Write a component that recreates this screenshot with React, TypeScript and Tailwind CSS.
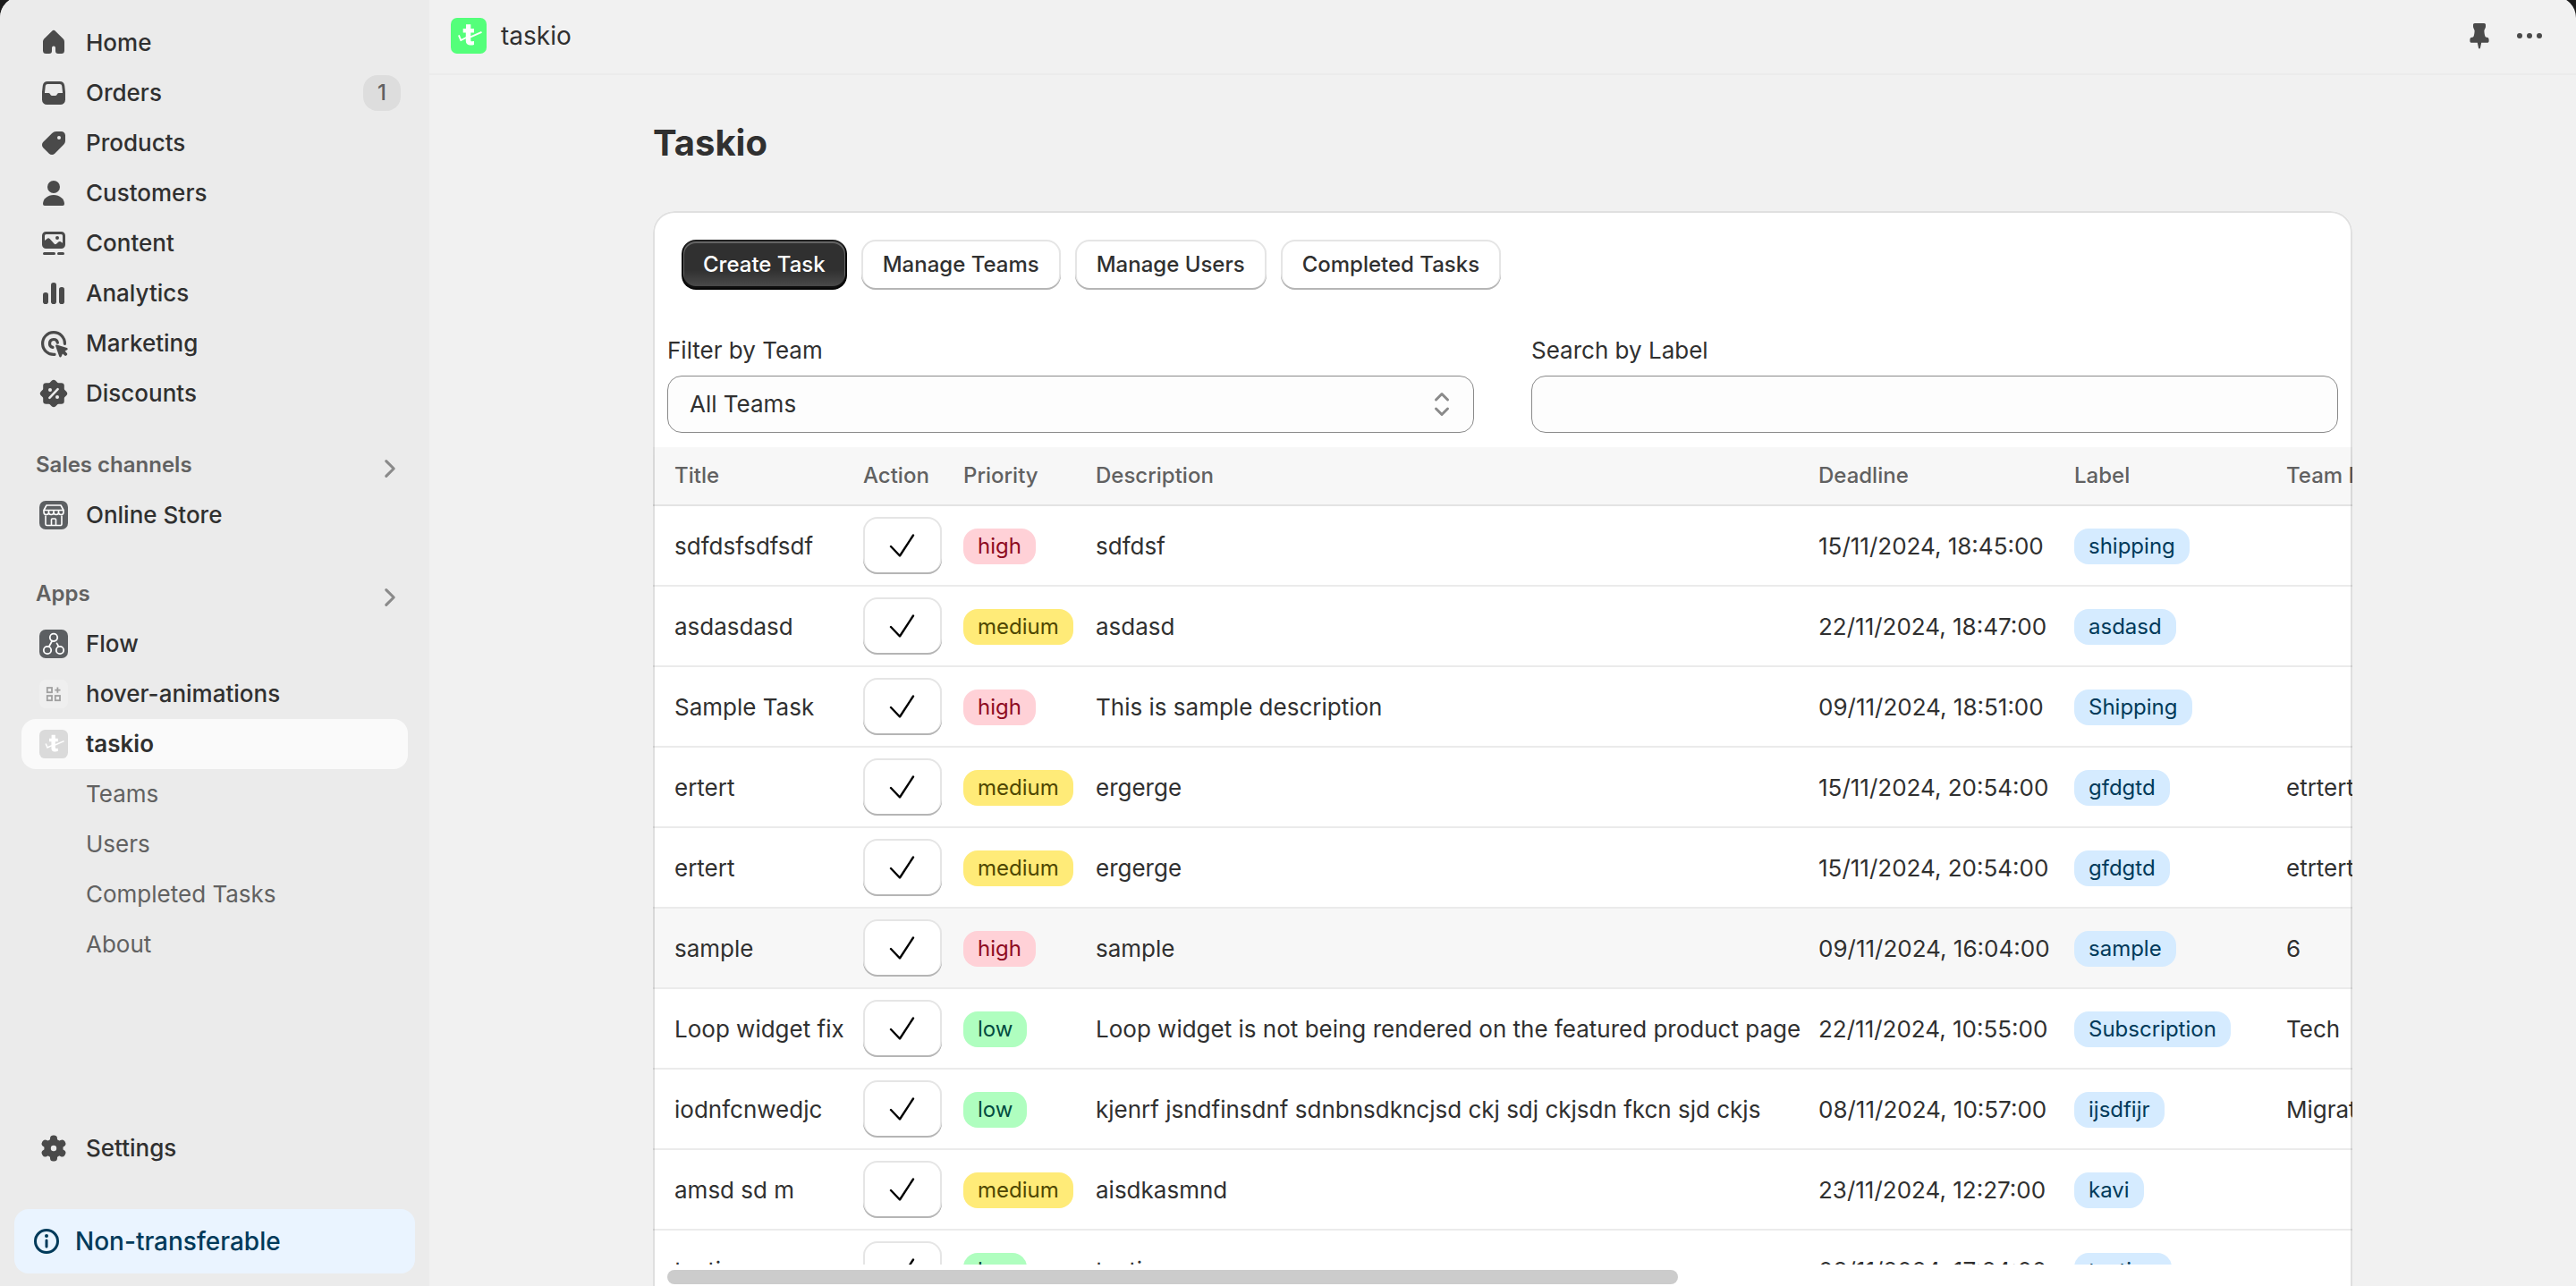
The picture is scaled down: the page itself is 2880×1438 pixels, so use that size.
import type { ReactNode } from "react";

type Level = "high" | "medium" | "low";

type Task = {
  title: string;
  priority: Level;
  description: string;
  deadline: string;
  label: string;
  team?: string;
  hovered?: boolean;
};

const tasks: Task[] = [
  { title: "sdfdsfsdfsdf", priority: "high", description: "sdfdsf", deadline: "15/11/2024, 18:45:00", label: "shipping" },
  { title: "asdasdasd", priority: "medium", description: "asdasd", deadline: "22/11/2024, 18:47:00", label: "asdasd" },
  { title: "Sample Task", priority: "high", description: "This is sample description", deadline: "09/11/2024, 18:51:00", label: "Shipping" },
  { title: "ertert", priority: "medium", description: "ergerge", deadline: "15/11/2024, 20:54:00", label: "gfdgtd", team: "etrtert" },
  { title: "ertert", priority: "medium", description: "ergerge", deadline: "15/11/2024, 20:54:00", label: "gfdgtd", team: "etrtert" },
  { title: "sample", priority: "high", description: "sample", deadline: "09/11/2024, 16:04:00", label: "sample", team: "6", hovered: true },
  { title: "Loop widget fix", priority: "low", description: "Loop widget is not being rendered on the featured product page", deadline: "22/11/2024, 10:55:00", label: "Subscription", team: "Tech" },
  { title: "iodnfcnwedjc", priority: "low", description: "kjenrf jsndfinsdnf sdnbnsdkncjsd ckj sdj ckjsdn fkcn sjd ckjs", deadline: "08/11/2024, 10:57:00", label: "ijsdfijr", team: "Migration" },
  { title: "amsd sd m", priority: "medium", description: "aisdkasmnd", deadline: "23/11/2024, 12:27:00", label: "kavi" },
  { title: "testing", priority: "low", description: "testing", deadline: "08/11/2024, 17:24:00", label: "testing" },
];

const levelStyle: Record<Level, string> = {
  high: "bg-[#ffd1d7] text-[#8e0b21]",
  medium: "bg-[#ffeb78] text-[#4f4700]",
  low: "bg-[#affebf] text-[#014b40]",
};

function Icon({ children }: { children: ReactNode }) {
  return (
    <svg viewBox="0 0 20 20" className="size-10 shrink-0 text-[#4a4a4a]" fill="currentColor" aria-hidden="true">
      {children}
    </svg>
  );
}

const HomeIcon = () => (
  <Icon>
    <path d="M8.94 3.44a1.5 1.5 0 0 1 2.12 0l4.2 4.2c.47.47.74 1.1.74 1.77v4.84a1.75 1.75 0 0 1-1.75 1.75h-1.75a1.5 1.5 0 0 1-1.5-1.5v-1.75a1 1 0 0 0-2 0v1.75a1.5 1.5 0 0 1-1.5 1.5h-1.75a1.75 1.75 0 0 1-1.75-1.75v-4.84c0-.66.26-1.3.73-1.77z" />
  </Icon>
);

const OrdersIcon = () => (
  <Icon>
    <path
      fillRule="evenodd"
      d="M6.6 3.5h6.8a2.75 2.75 0 0 1 2.7 2.4l.4 3.5v4.35a2.75 2.75 0 0 1-2.75 2.75h-7.5a2.75 2.75 0 0 1-2.75-2.75V9.4l.4-3.5a2.75 2.75 0 0 1 2.7-2.4zm0 1.5a1.2 1.2 0 0 0-1.2 1.05L4.97 10H7.1a1 1 0 0 1 .9.6l.1.2a1 1 0 0 0 .9.7h2a1 1 0 0 0 .9-.7l.1-.2a1 1 0 0 1 .9-.6h2.13l-.43-3.95A1.2 1.2 0 0 0 13.4 5z"
    />
  </Icon>
);

const ProductsIcon = () => (
  <Icon>
    <path
      fillRule="evenodd"
      d="M11.4 3.5h2.85a2.25 2.25 0 0 1 2.25 2.25v2.85c0 .86-.34 1.69-.95 2.3l-4.95 4.95a2.25 2.25 0 0 1-3.18 0l-3.27-3.27a2.25 2.25 0 0 1 0-3.18L9.1 4.45a3.25 3.25 0 0 1 2.3-.95zM13 8a1 1 0 1 0 0-2 1 1 0 0 0 0 2z"
    />
  </Icon>
);

const CustomersIcon = () => (
  <Icon>
    <circle cx="10" cy="6.5" r="3.5" />
    <path d="M4 16c0-2.8 2.7-5 6-5s6 2.2 6 5a1 1 0 0 1-1 1H5a1 1 0 0 1-1-1z" />
  </Icon>
);

const ContentIcon = () => (
  <Icon>
    <path
      fillRule="evenodd"
      d="M5.75 3.5h8.5a2.25 2.25 0 0 1 2.25 2.25v5A2.25 2.25 0 0 1 14.25 13h-8.5a2.25 2.25 0 0 1-2.25-2.25v-5A2.25 2.25 0 0 1 5.75 3.5zm0 1.5a.75.75 0 0 0-.75.75v2.8l1.3-1.1a1.1 1.1 0 0 1 1.5.1l2.6 2.8.5.3.6-.3 1.2-1.1a1 1 0 0 1 1.2-.1l1.1.7v-4.1a.75.75 0 0 0-.75-.75z"
    />
    <circle cx="12" cy="7" r="1" />
    <rect x="4" y="15" width="7" height="1.5" rx=".75" />
    <rect x="12" y="15" width="4" height="1.5" rx=".75" />
  </Icon>
);

const AnalyticsIcon = () => (
  <Icon>
    <rect x="4" y="9.5" width="3" height="6.5" rx="1.4" />
    <rect x="8.5" y="4" width="3" height="12" rx="1.4" />
    <rect x="13" y="6.5" width="3" height="9.5" rx="1.4" />
  </Icon>
);

const MarketingIcon = () => (
  <Icon>
    <path d="M16.2 10.2a6.2 6.2 0 1 0-5.7 6" fill="none" stroke="currentColor" strokeWidth="1.6" strokeLinecap="round" />
    <path d="M12.2 9.6a2.25 2.25 0 1 0-2.7 2.6" fill="none" stroke="currentColor" strokeWidth="1.6" strokeLinecap="round" />
    <path d="M11.7 10.8l5.7 1.7c.6.2.6.9.1 1.1l-1.2.7 1.1 1.2c.3.3.3.7 0 1l-.3.3c-.3.3-.7.3-1 0l-1.1-1.1-.7 1.7c-.3.6-1 .5-1.2-.1l-2-5.8c-.1-.5.2-.8.6-.7z" />
  </Icon>
);

const DiscountsIcon = () => (
  <Icon>
    <rect x="4.1" y="4.1" width="11.8" height="11.8" rx="1.6" />
    <rect x="4.2" y="4.2" width="11.6" height="11.6" rx="1.6" transform="rotate(45 10 10)" />
    <g className="text-[#ebebeb]">
      <path d="M12.3 7.6l-4.6 4.8" stroke="currentColor" strokeWidth="1.3" strokeLinecap="round" />
      <circle cx="8" cy="8" r="1" />
      <circle cx="12" cy="12" r="1" />
    </g>
  </Icon>
);

const SettingsIcon = () => (
  <Icon>
    <circle cx="10" cy="10" r="5.3" />
    <rect x="8" y="2.7" width="4" height="14.6" rx="1.8" />
    <rect x="8" y="2.7" width="4" height="14.6" rx="1.8" transform="rotate(60 10 10)" />
    <rect x="8" y="2.7" width="4" height="14.6" rx="1.8" transform="rotate(120 10 10)" />
    <circle cx="10" cy="10" r="1.6" className="text-[#ebebeb]" />
  </Icon>
);

const StoreIcon = () => (
  <svg viewBox="0 0 32 32" className="mx-1 size-8 shrink-0" fill="none" stroke="#fff" strokeWidth="1.6" strokeLinejoin="round" aria-hidden="true">
    <rect width="32" height="32" rx="7" fill="#5c5f62" stroke="none" />
    <path d="M8 5h16l3 5.5H5z" />
    <path d="M5 10.5v2.2a2.7 2.7 0 0 0 5.5 0 2.75 2.75 0 0 0 5.5 0 2.75 2.75 0 0 0 5.5 0 2.7 2.7 0 0 0 5.5 0v-2.2M10.5 10.5v2.2M16 10.5v2.2M21.5 10.5v2.2" />
    <path d="M7 16.5V26a1.5 1.5 0 0 0 1.5 1.5h15A1.5 1.5 0 0 0 25 26v-9.5" />
    <path d="M13.5 27v-6a1 1 0 0 1 1-1h3a1 1 0 0 1 1 1v6" />
  </svg>
);

const FlowIcon = () => (
  <svg viewBox="0 0 32 32" className="mx-1 size-8 shrink-0" fill="none" stroke="#fff" strokeWidth="1.8" strokeLinecap="round" aria-hidden="true">
    <rect width="32" height="32" rx="7" fill="#5c5f62" stroke="none" />
    <circle cx="16" cy="8.8" r="4.2" />
    <circle cx="9" cy="23" r="4.2" />
    <circle cx="23" cy="23" r="4.2" />
    <path d="M14.2 12.8l-3.3 6.1M19.6 15.4v.1M20.3 16.5l1 2.3" />
  </svg>
);

const PlaceholderIcon = () => (
  <svg viewBox="0 0 32 32" className="mx-1 size-8 shrink-0" fill="none" stroke="#a0a0a0" strokeWidth="1.8" aria-hidden="true">
    <rect width="32" height="32" rx="7" fill="#efefef" stroke="none" />
    <rect x="8.8" y="9" width="5.2" height="5.2" />
    <rect x="8.8" y="18" width="5.2" height="5.2" />
    <rect x="17.8" y="18" width="5.2" height="5.2" />
    <path d="M20.4 8.5v6.2M17.3 11.6h6.2" />
  </svg>
);

function TaskioMark({ className, background, radius }: { className: string; background: string; radius: number }) {
  return (
    <svg viewBox="0 0 40 40" className={className} aria-hidden="true">
      <rect width="40" height="40" rx={radius} fill={background} />
      <path d="M17 7.3h5.3v4.8H26v4.4h-3.7V25c0 1 .5 1.4 1.4 1.3l2.3-.3v4c-1.5.5-3.3.7-4.8.5-2.9-.3-4.4-1.900-4.4-4.700v-9.300h-3.100v-4.400H17z" fill="#fff" />
      <path d="M8.9 19.3l2.4 5.7 6-3M22 21.3l12.500-5.500" fill="none" stroke="#fff" strokeWidth="1.9" />
    </svg>
  );
}

const mainLinks: { name: string; icon: ReactNode; count?: number }[] = [
  { name: "Home", icon: <HomeIcon /> },
  { name: "Orders", icon: <OrdersIcon />, count: 1 },
  { name: "Products", icon: <ProductsIcon /> },
  { name: "Customers", icon: <CustomersIcon /> },
  { name: "Content", icon: <ContentIcon /> },
  { name: "Analytics", icon: <AnalyticsIcon /> },
  { name: "Marketing", icon: <MarketingIcon /> },
  { name: "Discounts", icon: <DiscountsIcon /> },
];

function NavItem({ name, icon, count, active }: { name: string; icon: ReactNode; count?: number; active?: boolean }) {
  return (
    <a
      href="#"
      className={`flex h-14 items-center gap-4 rounded-2xl pr-2 pl-4 text-[#303030] ${active ? "bg-[#fafafa] font-semibold" : "font-[550]"}`}
    >
      {icon}
      <span className="flex-1">{name}</span>
      {count !== undefined && (
        <span className="rounded-2xl bg-[#dddddd] px-4 text-2xl leading-10 text-[#616161]">{count}</span>
      )}
    </a>
  );
}

function SectionHeader({ name }: { name: string }) {
  return (
    <button type="button" className="flex h-14 w-full items-center justify-between pr-2 pl-4 text-2xl font-semibold text-[#616161]">
      {name}
      <svg viewBox="0 0 20 20" className="mt-2 size-6 text-[#8a8a8a]" fill="none" stroke="currentColor" strokeWidth="2.6" strokeLinecap="round" strokeLinejoin="round" aria-hidden="true">
        <path d="M6.500 3l7 7-7 7" />
      </svg>
    </button>
  );
}

function Sidebar() {
  return (
    <aside className="flex w-[480px] shrink-0 flex-col bg-[#ebebeb]">
      <nav className="flex-1 px-6 pt-5">
        {mainLinks.map((l) => (
          <NavItem key={l.name} {...l} />
        ))}
        <div className="mt-6">
          <SectionHeader name="Sales channels" />
          <NavItem name="Online Store" icon={<StoreIcon />} />
        </div>
        <div className="mt-8">
          <SectionHeader name="Apps" />
          <NavItem name="Flow" icon={<FlowIcon />} />
          <NavItem name="hover-animations" icon={<PlaceholderIcon />} />
          <NavItem name="taskio" active icon={<TaskioMark className="mx-1 size-8 shrink-0" background="#dadada" radius={8} />} />
          {["Teams", "Users", "Completed Tasks", "About"].map((n) => (
            <a key={n} href="#" className="flex h-14 items-center pl-[72px] text-[#616161]">
              {n}
            </a>
          ))}
        </div>
      </nav>
      <div className="px-6 pb-10">
        <NavItem name="Settings" icon={<SettingsIcon />} />
      </div>
      <div className="mx-4 mb-3.5 flex h-18 items-center gap-3 rounded-2xl bg-[#eaf4ff] px-4 text-[28px] font-[550] text-[#003a5a]">
        <svg viewBox="0 0 20 20" className="size-10" fill="none" stroke="currentColor" strokeWidth="1.5" strokeLinecap="round" aria-hidden="true">
          <circle cx="10" cy="10" r="6.25" />
          <path d="M10 9.5v3.5" />
          <circle cx="10" cy="7" r="1" fill="currentColor" stroke="none" />
        </svg>
        Non-transferable
      </div>
    </aside>
  );
}

function TopBar() {
  return (
    <header className="flex h-[84px] shrink-0 items-center gap-4 border-b-2 border-[#ebebeb] pr-8 pb-0.5 pl-6">
      <TaskioMark className="size-10" background="#54ff7a" radius={7} />
      <span className="flex-1 text-[28px]">taskio</span>
      <button type="button" aria-label="Pin app">
        <svg viewBox="0 0 20 20" className="size-10 text-[#4a4a4a]" fill="currentColor" aria-hidden="true">
          <path d="M7.4 3h5.2c.5 0 .9.4.9.9v1c0 .9-.7 1.5-.8 2.2 0 1 .2 2.5.6 3.4.2.3.5.3.9.4.7.1 1.1.6 1.1 1.300v.8c0 .5-.4.9-.9.9h-3.300l-.6 2.900c-.1.6-.9.6-1 0l-.6-2.900H5.600c-.5 0-.9-.4-.9-.9v-.8c0-.7.4-1.200 1.100-1.300.4-.1.7-.1.9-.4.4-.9.6-2.400.6-3.400-.1-.7-.8-1.300-.8-2.200v-1c0-.5.4-.9.9-.9z" />
        </svg>
      </button>
      <button type="button" aria-label="More actions">
        <svg viewBox="0 0 20 20" className="size-10 text-[#4a4a4a]" fill="currentColor" aria-hidden="true">
          <circle cx="4.5" cy="10" r="1.5" />
          <circle cx="10" cy="10" r="1.5" />
          <circle cx="15.5" cy="10" r="1.5" />
        </svg>
      </button>
    </header>
  );
}

const secondaryShadow = "bg-white shadow-[inset_0_-2px_0_#b5b5b5,inset_0_0_0_2px_#e5e5e5]";

function TaskRow({ task }: { task: Task }) {
  return (
    <tr className={`h-[90px] [&>td]:border-b-2 [&>td]:border-[#ebebeb] ${task.hovered ? "bg-[#f7f7f7]" : ""}`}>
      <td className="pt-0.5 pl-6">{task.title}</td>
      <td className="px-3">
        <button type="button" aria-label={`Complete ${task.title}`} className={`flex h-16 w-[88px] items-center justify-center rounded-2xl ${secondaryShadow}`}>
          <svg viewBox="0 0 32 32" className="size-8" fill="none" stroke="#000" strokeWidth="2.4" strokeLinecap="round" strokeLinejoin="round" aria-hidden="true">
            <path d="M3 17l10 10.500L28 4.500" />
          </svg>
        </button>
      </td>
      <td className="px-3">
        <span className={`inline-block rounded-2xl px-4 align-middle text-2xl leading-10 ${levelStyle[task.priority]}`}>{task.priority}</span>
      </td>
      <td className="px-3 pt-0.5">{task.description}</td>
      <td className="px-3 pt-0.5">{task.deadline}</td>
      <td className="px-3">
        <span className="inline-block rounded-2xl bg-[#d5ebff] px-4 align-middle text-2xl leading-10 text-[#003a5a]">{task.label}</span>
      </td>
      <td className="px-3 pt-0.5">{task.team}</td>
    </tr>
  );
}

export default function App() {
  return (
    <div className="h-screen overflow-hidden bg-[#1a1a1a] font-['Inter',sans-serif] text-[26px] leading-10 text-[#303030]">
      <div className="-mt-1 flex h-[calc(100%+4px)] overflow-hidden rounded-t-3xl bg-[#f1f1f1] bg-[linear-gradient(to_right,#ebebeb_480px,#f1f1f1_480px)] pt-1">
        <Sidebar />
        <div className="flex min-w-0 flex-1 flex-col">
          <TopBar />
          <main className="mx-auto flex min-h-0 w-full max-w-[1900px] flex-1 flex-col">
            <h1 className="py-12 text-[40px] leading-14 font-[650]">Taskio</h1>
            <section className="relative flex min-h-0 flex-1 flex-col overflow-hidden rounded-t-3xl bg-white after:pointer-events-none after:absolute after:inset-0 after:rounded-t-3xl after:border-2 after:border-b-0 after:border-black/12">
              <div className="flex gap-4 p-8 text-2xl font-[550]">
                <button
                  type="button"
                  className="h-14 rounded-2xl bg-[#303030] bg-linear-to-b from-transparent from-60% to-white/15 px-6 text-white shadow-[inset_0_-2px_0_2px_rgba(0,0,0,0.8),inset_0_0_0_2px_#202020,inset_0_1px_0_3px_rgba(255,255,255,0.25)]"
                >
                  Create Task
                </button>
                {["Manage Teams", "Manage Users", "Completed Tasks"].map((n) => (
                  <button key={n} type="button" className={`h-14 rounded-2xl px-6 ${secondaryShadow}`}>
                    {n}
                  </button>
                ))}
              </div>
              <div className="grid grid-cols-2 gap-16 px-4 pt-4 pb-4">
                <div className="flex flex-col gap-2">
                  <label htmlFor="team">Filter by Team</label>
                  <div className="relative">
                    <select id="team" className="h-16 w-full appearance-none rounded-2xl border border-[#8a8a8a] bg-[#fdfdfd] px-6">
                      <option>All Teams</option>
                    </select>
                    <svg viewBox="0 0 20 20" className="pointer-events-none absolute top-3 right-4 size-10 text-[#8a8a8a]" fill="none" stroke="currentColor" strokeWidth="1.5" strokeLinecap="round" strokeLinejoin="round" aria-hidden="true">
                      <path d="M6.75 7.5L10 4.25l3.25 3.25M6.75 12.5L10 15.75l3.25-3.25" />
                    </svg>
                  </div>
                </div>
                <div className="flex flex-col gap-2">
                  <label htmlFor="label">Search by Label</label>
                  <input id="label" type="text" className="h-16 w-full rounded-2xl border border-[#8a8a8a] bg-[#fdfdfd] px-6" />
                </div>
              </div>
              <div className="min-h-0 flex-1 overflow-hidden">
                <table className="w-[3130px] table-fixed border-separate border-spacing-0 whitespace-nowrap">
                  <colgroup>
                    <col className="w-[223px]" />
                    <col className="w-[112px]" />
                    <col className="w-[148px]" />
                    <col className="w-[808px]" />
                    <col className="w-[286px]" />
                    <col className="w-[237px]" />
                    <col />
                  </colgroup>
                  <thead>
                    <tr className="h-[66px] bg-[#f7f7f7] text-left text-2xl text-[#616161] [&>th]:border-b-2 [&>th]:border-[#e3e3e3]">
                      <th className="pl-6 font-[550]">Title</th>
                      {["Action", "Priority", "Description", "Deadline", "Label", "Team Name"].map((h) => (
                        <th key={h} className="px-3 font-[550]">
                          {h}
                        </th>
                      ))}
                    </tr>
                  </thead>
                  <tbody>
                    {tasks.map((t, i) => (
                      <TaskRow key={i} task={t} />
                    ))}
                  </tbody>
                </table>
              </div>
              <div className="px-4 pt-1.5 pb-0.5">
                <div className="h-4 w-[60.5%] rounded-full bg-[#cccccc]" />
              </div>
            </section>
          </main>
        </div>
      </div>
    </div>
  );
}
